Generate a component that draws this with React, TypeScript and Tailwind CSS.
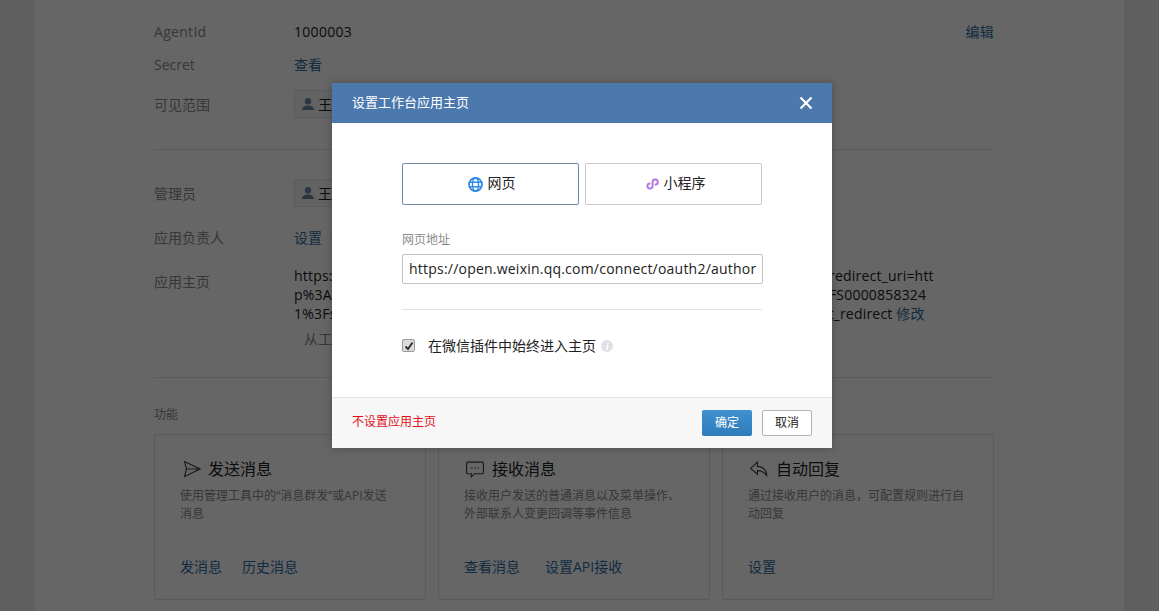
import React from 'react'

const link = 'text-[#2e6da4]'

function UserChip() {
  return (
    <div className="flex h-[28px] w-[96px] items-center gap-[3px] rounded-[2px] border border-[#e4e4e4] bg-[#f7f7f7] pl-[6px]">
      <svg width="14" height="14" viewBox="0 0 14 14" fill="#6f87a8">
        <circle cx="7" cy="4.2" r="3.2" />
        <path d="M1 13c0-3 2.4-4.2 4.6-4.6h2.8C10.600 8.800 13 10 13 13z" />
      </svg>
      <span>王</span>
    </div>
  )
}

function Row({ label, children, className }: { label: string; children: React.ReactNode; className?: string }) {
  return (
    <div className={`flex ${className ?? ''}`}>
      <div className="w-[140px] shrink-0 text-[#8a8a8a]">{label}</div>
      <div className="min-w-0 flex-1">{children}</div>
    </div>
  )
}

function FeatureCard({ icon, title, desc, links }: { icon: React.ReactNode; title: string; desc: string[]; links: { text: string; gap?: string }[] }) {
  return (
    <div className="h-[166px] w-[272px] rounded-[2px] border border-[#e2e2e2] pl-[25px] pt-[23px]">
      <div className="flex h-[22px] items-center text-[16px] leading-[22px] text-[#222]">
        <span className="mr-[7px] flex w-[21px] justify-end">{icon}</span>
        {title}
      </div>
      <div className="mt-[7px] text-[12px] leading-[18px] text-[#8a8a8a]">
        {desc.map((d) => (
          <div key={d}>{d}</div>
        ))}
      </div>
      <div className={`mt-[34px] flex leading-[20px] ${link}`}>
        {links.map((l) => (
          <span key={l.text} className={l.gap}>
            {l.text}
          </span>
        ))}
      </div>
    </div>
  )
}

export default function App() {
  return (
    <div className="relative h-[611px] overflow-hidden bg-[#eeeeee] text-[14px] text-[#222] [font-family:'Open_Sans','Noto_Sans_CJK_SC',sans-serif]">
      {/* page behind the dialog */}
      <div className="mx-[35px] h-[611px] bg-white pl-[119px] pr-[130px] pt-[22px]">
        <Row label="AgentId" className="h-[20px] leading-[20px] tracking-[0.3px]">
          <div className="flex justify-between">
            <span>1000003</span>
            <span className={link}>编辑</span>
          </div>
        </Row>
        <Row label="Secret" className="mt-[13px] h-[20px] leading-[20px]">
          <span className={link}>查看</span>
        </Row>
        <Row label="可见范围" className="mt-[15px] items-center">
          <UserChip />
        </Row>
        <div className="mt-[31px] border-t border-[#e4e4e4]" />
        <Row label="管理员" className="mt-[29px] items-center">
          <UserChip />
        </Row>
        <Row label="应用负责人" className="mt-[21px] h-[20px] leading-[20px]">
          <span className={link}>设置</span>
          <span className="ml-[8px] text-[12px] text-[#aaaaaa]">可设置负责人</span>
        </Row>
        <Row label="应用主页" className="mt-[23px]">
          <div className="-mt-[5px] whitespace-nowrap leading-[19px] tracking-[0.2px]">
            <div>https://open.weixin.qq.com/connect/oauth2/authorize?appid=wx5823bf96d3b&amp;redirect_uri=htt</div>
            <div>p%3A%2F%2Fwork.weixin.qq.com%2Fapi%2Fdoc%2F90000%2F90135%2F910%2FS0000858324</div>
            <div>
              1%3Fstate%3DSTATE%26response_type%3Dcode%26scope%3Dbase123#wechat_redirect{' '}
              <span className={link}>修改</span>
            </div>
            <div className="mt-[6px] pl-[10px] text-[#8a8a8a]">从工作台进入</div>
          </div>
        </Row>
        <div className="mt-[29px] border-t border-[#e4e4e4]" />
        <div className="mt-[28px] text-[12px] leading-[18px] text-[#8a8a8a]">功能</div>
        <div className="mt-[10px] flex gap-[12px]">
          <FeatureCard
            title="发送消息"
            desc={['使用管理工具中的“消息群发”或API发送', '消息']}
            links={[{ text: '发消息', gap: 'mr-[20px]' }, { text: '历史消息' }]}
            icon={
              <svg width="18" height="18" viewBox="0 0 18 18" fill="none" stroke="#444" strokeWidth="1.100">
                <path d="M1.500 1.500 17 9 1.500 16.500 3.500 9zM3.500 9H17" />
              </svg>
            }
          />
          <FeatureCard
            title="接收消息"
            desc={['接收用户发送的普通消息以及菜单操作、', '外部联系人变更回调等事件信息']}
            links={[{ text: '查看消息', gap: 'mr-[25px]' }, { text: '设置API接收' }]}
            icon={
              <svg width="20" height="19" viewBox="0 0 19 18" fill="none" stroke="#444" strokeWidth="1.100">
                <path d="M2.500 2h14a1 1 0 0 1 1 1v9a1 1 0 0 1-1 1H9l-3 3v-3H2.500a1 1 0 0 1-1-1V3a1 1 0 0 1 1-1z" />
                <path d="M6 7.500h1M9 7.500h1M12 7.500h1" strokeWidth="1.400" />
              </svg>
            }
          />
          <FeatureCard
            title="自动回复"
            desc={['通过接收用户的消息，可配置规则进行自', '动回复']}
            links={[{ text: '设置' }]}
            icon={
              <svg width="20" height="19" viewBox="0 0 19 18" fill="none" stroke="#444" strokeWidth="1.100">
                <path d="M8 2 1.500 8 8 13.500V10c4 0 7 1.500 9 5.500C17 10 13.500 6 8 6z" />
              </svg>
            }
          />
        </div>
      </div>

      {/* backdrop */}
      <div className="absolute inset-0 bg-black/60" />

      {/* dialog */}
      <div className="absolute left-[332px] top-[83px] w-[500px] bg-white shadow-[0_0_8px_rgba(0,0,0,0.25)]">
        <div className="flex h-[40px] items-center justify-between bg-[#4c79ad] pl-[20px] pr-[19px] text-[13px] text-white">
          <span className="-mt-[1px]">设置工作台应用主页</span>
          <svg width="14" height="14" viewBox="0 0 14 14" stroke="white" strokeWidth="2.200">
            <path d="M1.500 1.500 12.500 12.500M12.500 1.500 1.500 12.500" />
          </svg>
        </div>

        <div className="h-[274px] px-[70px] pt-[40px]">
          <div className="flex gap-[6px]">
            <div className="flex h-[42px] w-[177px] items-center justify-center gap-[5px] rounded-[2px] border border-[#6d8bad] pl-[2px]">
              <svg width="15" height="15" viewBox="0 0 15 15" fill="none" stroke="#2d8ae6" strokeWidth="1.400">
                <circle cx="7.500" cy="7.500" r="6.500" strokeWidth="1.800" />
                <ellipse cx="7.500" cy="7.500" rx="3" ry="6.500" />
                <path d="M1 5.200h13M1 9.800h13" />
              </svg>
              <span className="-mt-[4px]">网页</span>
            </div>
            <div className="flex h-[42px] w-[177px] items-center justify-center gap-[4px] rounded-[2px] border border-[#c8c8c8] pl-[4px]">
              <svg width="14" height="14" viewBox="0 0 14 14" fill="none" stroke="#b277e0" strokeWidth="2" strokeLinecap="round">
                <path d="M3.600 6.400A2.600 2.600 0 1 0 6.600 9V5A2.600 2.600 0 1 1 9.600 7.600" />
              </svg>
              <span className="-mt-[4px]">小程序</span>
            </div>
          </div>

          <div className="mt-[25px] text-[12px] leading-[20px] text-[#8a8a8a]">网页地址</div>
          <div className="mt-[4px] h-[30px] w-[361px] overflow-hidden whitespace-nowrap rounded-[2px] border border-[#c4c4c4] px-[6px] leading-[28px] tracking-[0.22px]">
            https://open.weixin.qq.com/connect/oauth2/author
          </div>

          <div className="mt-[25px] w-[360px] border-t border-[#e2e2e2]" />

          <div className="mt-[26px] flex h-[20px] items-center leading-[20px]">
            <div className="-mt-[1px] flex h-[13px] w-[13px] items-center justify-center rounded-[2px] border border-[#999] bg-[#dcdcdc]">
              <svg width="10" height="10" viewBox="0 0 10 10" fill="none" stroke="#333" strokeWidth="2">
                <path d="M1.500 5.500 4 8l4.500-6.500" />
              </svg>
            </div>
            <span className="ml-[13px]">在微信插件中始终进入主页</span>
            <span className="ml-[5px] flex h-[12px] w-[12px] items-center justify-center rounded-full bg-[#dfe1e4] text-[9px] font-bold italic leading-none text-white">
              i
            </span>
          </div>
        </div>

        <div className="flex h-[51px] items-center justify-between border-t border-[#e4e4e4] bg-[#f7f7f7] pl-[20px] pr-[20px]">
          <span className="-mt-[2px] text-[12px] text-[#e0101a]">不设置应用主页</span>
          <div className="-mt-[1px] flex gap-[10px] text-[12px]">
            <div className="flex h-[26px] w-[50px] items-center justify-center rounded-[2px] bg-linear-to-b from-[#4090d0] to-[#2e7cbc] text-white">确定</div>
            <div className="flex h-[26px] w-[50px] items-center justify-center rounded-[2px] border border-[#b4b4b4] bg-white text-[#222]">取消</div>
          </div>
        </div>
      </div>
    </div>
  )
}
